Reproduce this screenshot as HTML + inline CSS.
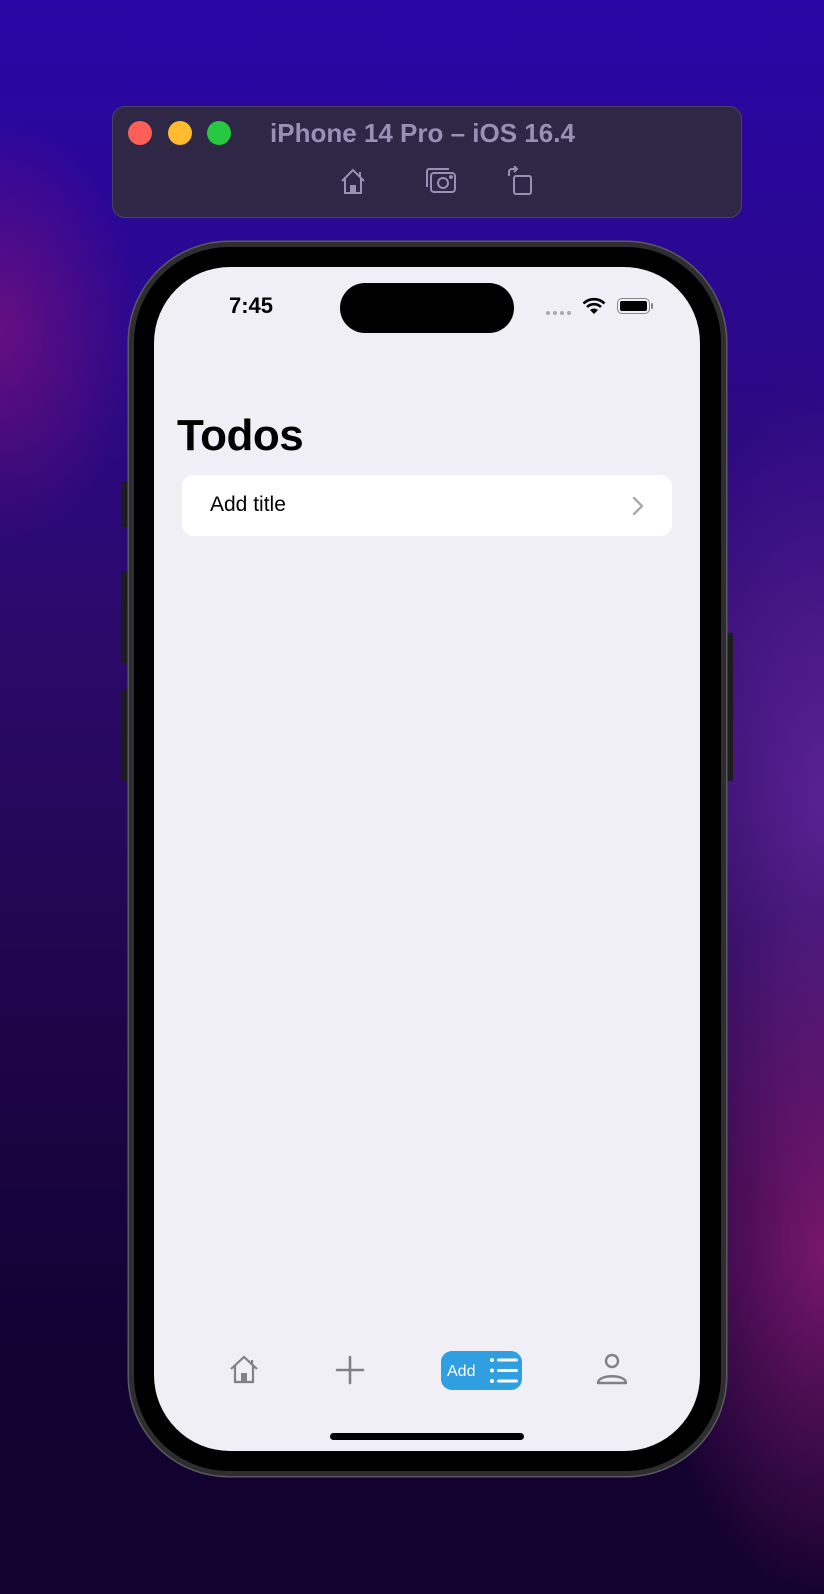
<!DOCTYPE html>
<html><head><meta charset="utf-8"><style>
*{margin:0;padding:0;box-sizing:border-box}
html,body{width:824px;height:1594px;overflow:hidden}
body{position:relative;font-family:"Liberation Sans",sans-serif;
background:
radial-gradient(ellipse 260px 500px at 824px 1250px,rgba(200,40,150,.55),transparent 70%),
radial-gradient(ellipse 300px 600px at 824px 800px,rgba(140,60,200,.5),transparent 70%),
radial-gradient(ellipse 200px 300px at 0px 330px,rgba(150,20,120,.55),transparent 70%),
linear-gradient(180deg,#2a06a6 0%,#2a0890 18%,#2c0a6a 40%,#1e0548 65%,#120232 85%,#14022e 100%);}
.tb{position:absolute;left:112px;top:106px;width:630px;height:112px;border-radius:13px;background:#2e2745;border:1px solid #4a4260}
.dot{position:absolute;top:121px;width:24px;height:24px;border-radius:50%}
.ttl{position:absolute;left:270px;top:118px;font-size:26px;font-weight:bold;color:#9a8fb5;white-space:nowrap}
.phone{position:absolute;left:129px;top:242px;width:597px;height:1234px;border-radius:100px;background:#000;border:5px solid #2e2e30;box-shadow:0 0 0 1.5px #5a5a5e}
.btn{position:absolute;background:#1c1c1e;width:8px;border-radius:2px}
.screen{position:absolute;left:154px;top:267px;width:546px;height:1184px;border-radius:76px;background:#f0eff5;overflow:hidden}
.island{position:absolute;left:186px;top:16px;width:174px;height:50px;border-radius:25px;background:#000}
</style></head><body>
<div class="tb"></div>
<div class="dot" style="left:128px;background:#fe5f57"></div>
<div class="dot" style="left:168px;background:#febc2e"></div>
<div class="dot" style="left:207px;background:#28c840"></div>
<div class="ttl">iPhone 14 Pro – iOS 16.4</div>
<svg style="position:absolute;left:338px;top:166px" width="30" height="30" viewBox="0 0 30 30" fill="none" stroke="#9a8fb5" stroke-width="2"><path d="M4 15 L15 4 L26 15 M7 12 V27 H23 V12 M22 6 V11"/><rect x="12" y="19" width="6" height="8" fill="#9a8fb5" stroke="none"/></svg>
<svg style="position:absolute;left:424px;top:166px" width="34" height="30" viewBox="0 0 34 30" fill="none" stroke="#9a8fb5" stroke-width="2"><path d="M3 21 V5 a2 2 0 0 1 2 -2 H25"/><rect x="7" y="7" width="24" height="19" rx="3"/><circle cx="19" cy="17" r="5"/><circle cx="27" cy="11" r="1" fill="#9a8fb5"/></svg>
<svg style="position:absolute;left:505px;top:166px" width="30" height="30" viewBox="0 0 30 30" fill="none" stroke="#9a8fb5" stroke-width="2"><rect x="9" y="10" width="17" height="18" rx="2"/><path d="M4 10 V6 a3 3 0 0 1 3 -3 H12 M9 0 L12 3 L9 6"/></svg>

<div class="btn" style="left:121px;top:481px;height:46px"></div>
<div class="btn" style="left:121px;top:571px;height:92px"></div>
<div class="btn" style="left:121px;top:689px;height:92px"></div>
<div class="btn" style="left:725px;top:633px;height:148px"></div>
<div class="phone"></div>
<div class="screen">
 <div class="island"></div>
 <div style="position:absolute;left:75px;top:26px;font-size:22px;font-weight:bold;color:#000">7:45</div>
 <div style="position:absolute;left:392px;top:44px;display:flex;gap:3px"><i style="width:4px;height:4px;border-radius:2px;background:#aaa"></i><i style="width:4px;height:4px;border-radius:2px;background:#aaa"></i><i style="width:4px;height:4px;border-radius:2px;background:#aaa"></i><i style="width:4px;height:4px;border-radius:2px;background:#aaa"></i></div>
 <svg style="position:absolute;left:428px;top:30px" width="24" height="18" viewBox="0 0 24 18"><path d="M12 17 L8 13 A6 6 0 0 1 16 13Z" fill="#000"/><path d="M5 10 A10 10 0 0 1 19 10" stroke="#000" stroke-width="2.6" fill="none"/><path d="M1.5 6.5 A15 15 0 0 1 22.5 6.5" stroke="#000" stroke-width="2.6" fill="none"/></svg>
 <div style="position:absolute;left:463px;top:31px;width:33px;height:16px;border:1.5px solid #888;border-radius:5px;padding:2px"><div style="width:100%;height:100%;background:#000;border-radius:2px"></div></div>
 <div style="position:absolute;left:497px;top:36px;width:2px;height:6px;background:#888;border-radius:1px"></div>
 <div style="position:absolute;left:23px;top:144px;font-size:44px;font-weight:bold;color:#000;letter-spacing:-.5px">Todos</div>
 <div style="position:absolute;left:28px;top:208px;width:490px;height:61px;background:#fff;border-radius:11px">
  <div style="position:absolute;left:28px;top:18px;font-size:21px;color:#000">Add title</div>
  <svg style="position:absolute;left:450px;top:21px" width="12" height="20" viewBox="0 0 12 20"><path d="M2 2 L10 10 L2 18" stroke="#a8a8ad" stroke-width="2.4" fill="none" stroke-linecap="round" stroke-linejoin="round"/></svg>
 </div>
 <svg style="position:absolute;left:74px;top:1087px" width="32" height="32" viewBox="0 0 32 32" fill="none" stroke="#808086" stroke-width="2.2"><path d="M3 15 L16 3 L29 15 M7 12 V28 H25 V12 M24 6 V11"/><rect x="13" y="19" width="6" height="9" fill="#808086" stroke="none"/></svg>
 <svg style="position:absolute;left:181px;top:1088px" width="30" height="30" viewBox="0 0 30 30" stroke="#808086" stroke-width="2.6" stroke-linecap="round"><path d="M15 2 V28 M2 15 H28"/></svg>
 <div style="position:absolute;left:287px;top:1084px;width:81px;height:39px;background:#2f9fe2;border-radius:11px">
  <div style="position:absolute;left:6px;top:12px;color:#fff;font-size:16px">Add</div>
  <svg style="position:absolute;left:48px;top:4px" width="30" height="31" viewBox="0 0 30 31" fill="#fff"><circle cx="3" cy="5" r="2"/><circle cx="3" cy="15.5" r="2"/><circle cx="3" cy="26" r="2"/><rect x="8" y="3.5" width="21" height="3" rx="1.5"/><rect x="8" y="14" width="21" height="3" rx="1.5"/><rect x="8" y="24.5" width="21" height="3" rx="1.5"/></svg>
 </div>
 <svg style="position:absolute;left:442px;top:1085px" width="32" height="34" viewBox="0 0 32 34" fill="none" stroke="#808086" stroke-width="2.4"><circle cx="16" cy="9" r="6"/><path d="M2 31 C2 22 30 22 30 31 Z" stroke-linejoin="round"/></svg>
 <div style="position:absolute;left:176px;top:1166px;width:194px;height:7px;border-radius:4px;background:#000"></div>
</div>
</body></html>
